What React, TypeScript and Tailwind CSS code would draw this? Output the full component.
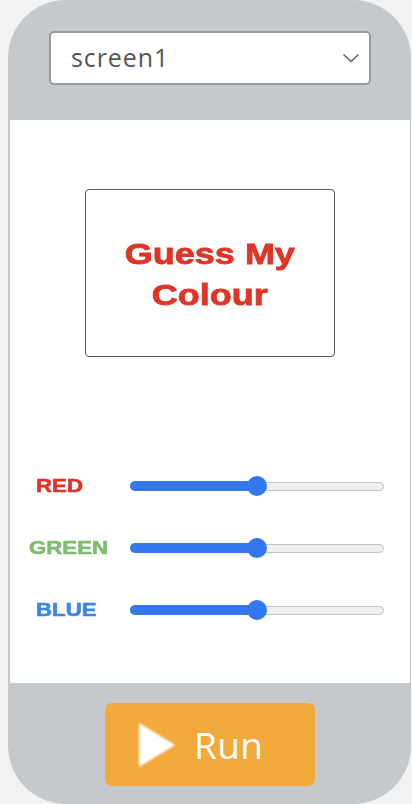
import React from "react";

function Slider() {
  return (
    <div className="relative w-[254px] h-[20px] flex items-center">
      <div className="w-full h-[9px] rounded-full bg-[#efefef] border border-[#c4c4c4]" />
      <div className="absolute left-0 top-[5px] h-[10px] w-[128px] rounded-full bg-[#3478ef]" />
      <div className="absolute left-[117px] top-0 w-[20px] h-[20px] rounded-full bg-[#3478ef]" />
    </div>
  );
}

function Row({ label, color, ml }: { label: string; color: string; ml: string }) {
  return (
    <div className="flex items-center h-[20px]">
      <div className="w-[120px] flex">
        <span
          className={`${color} ${ml} inline-block origin-left scale-x-[1.17] font-bold text-[19px] [-webkit-text-stroke:0.6px_currentColor]`}
          style={{ fontFamily: '"Liberation Sans", Arial, sans-serif' }}
        >
          {label}
        </span>
      </div>
      <Slider />
    </div>
  );
}

export default function App() {
  return (
    <div className="w-[412px] h-[804px] bg-[#f2f2f2] pl-[8px] pr-[1px]">
      <div className="w-full h-full bg-[#c5c9cc] rounded-[58px] flex flex-col overflow-hidden">
        <div className="h-[120px] pt-[31px] pl-[41px]">
          <div className="w-[322px] h-[54px] bg-white border-2 border-[#999c9f] rounded-[5px] flex items-center justify-between pl-[20px] pr-[9px]">
            <span
              className="text-[25px] text-[#555] tracking-[0.9px]"
              style={{ fontFamily: '"Open Sans", "Noto Sans", sans-serif' }}
            >
              screen1
            </span>
            <svg width="18" height="10" viewBox="0 0 18 10" fill="none">
              <path d="M1.5 1.5 L9 8.5 L16.5 1.5" stroke="#666" strokeWidth="1.6" />
            </svg>
          </div>
        </div>
        <div className="h-[563px] bg-white ml-[2px] mr-[1px] flex flex-col">
          <div className="pt-[69px] pl-[75px]">
            <div className="w-[250px] h-[168px] border border-[#555a60] rounded-[4px] flex items-center justify-center pt-[2px]">
              <div
                className="text-[#e03427] font-bold text-[30px] leading-[41px] text-center inline-block scale-x-[1.2] [-webkit-text-stroke:0.8px_#e03427]"
                style={{ fontFamily: '"Liberation Sans", Arial, sans-serif' }}
              >
                Guess My
                <br />
                Colour
              </div>
            </div>
          </div>
          <div className="mt-[119px] flex flex-col gap-[42px]">
            <Row label="RED" color="text-[#e03427]" ml="ml-[26px]" />
            <Row label="GREEN" color="text-[#7cbd6f]" ml="ml-[19px]" />
            <Row label="BLUE" color="text-[#3a87e8]" ml="ml-[26px]" />
          </div>
        </div>
        <div className="flex-1 pt-[20px] pl-[97px]">
          <div className="w-[210px] h-[83px] bg-[#f2a93c] rounded-[7px] flex items-center pl-[33px] gap-[18px]">
            <svg width="38" height="46" viewBox="0 0 38 46" className="mt-[1px]" style={{ filter: "blur(0.8px)" }}>
              <polygon points="1,1 37,23 1,45" fill="#ffffff" />
            </svg>
            <span
              className="text-white text-[37px] tracking-[0.4px]"
              style={{ fontFamily: '"Open Sans", "Noto Sans", sans-serif' }}
            >
              Run
            </span>
          </div>
        </div>
      </div>
    </div>
  );
}
